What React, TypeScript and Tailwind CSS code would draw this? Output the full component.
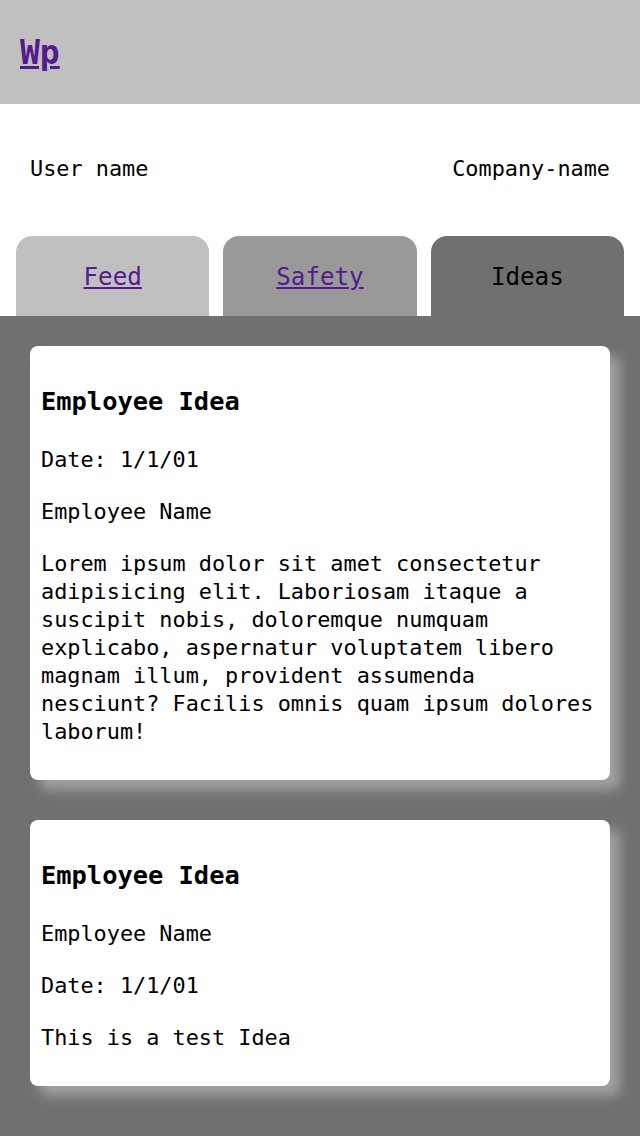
import React from "react";

const mono = { fontFamily: '"DejaVu Sans Mono", "Liberation Mono", monospace' };

function Card({ lines }: { lines: string[] }) {
  return (
    <div className="bg-white rounded-lg px-[11px] pt-[40px] pb-[34px] shadow-[10px_10px_12px_#a0a0a0]">
      <h3 className="text-[25.4px] font-bold leading-[30px] text-black">Employee Idea</h3>
      {lines.map((l, i) => (
        <p key={i} className={`text-[21.85px] leading-[28px] text-black ${i === 0 ? "mt-[30px]" : "mt-[24px]"}`}>
          {l}
        </p>
      ))}
    </div>
  );
}

export default function App() {
  return (
    <div style={mono} className="w-[640px] min-h-[1136px] bg-[#707070] flex flex-col">
      <header className="h-[104px] bg-[#c0c0c0] flex items-center px-[20px]">
        <a href="#" className="text-[33px] font-bold leading-none text-[#551a8b] underline">Wp</a>
      </header>
      <div className="bg-white">
        <div className="h-[132px] flex items-center justify-between px-[30px] text-[21.85px] text-black pb-[2px]">
          <span>User name</span>
          <span>Company-name</span>
        </div>
        <div className="flex gap-[14px] px-[16px]">
          <div className="flex-1 h-[80px] rounded-t-[16px] bg-[#c0c0c0] flex items-center justify-center text-[24.2px] pt-[2px]">
            <a href="#" className="text-[#551a8b] underline">Feed</a>
          </div>
          <div className="flex-1 h-[80px] rounded-t-[16px] bg-[#999999] flex items-center justify-center text-[24.2px] pt-[2px]">
            <a href="#" className="text-[#551a8b] underline">Safety</a>
          </div>
          <div className="flex-1 h-[80px] rounded-t-[16px] bg-[#707070] flex items-center justify-center text-[24.2px] pt-[2px] text-black">
            Ideas
          </div>
        </div>
      </div>
      <main className="flex-1 bg-[#707070] px-[30px] pt-[30px] pb-[50px] flex flex-col gap-[40px]">
        <Card
          lines={[
            "Date: 1/1/01",
            "Employee Name",
            "Lorem ipsum dolor sit amet consectetur adipisicing elit. Laboriosam itaque a suscipit nobis, doloremque numquam explicabo, aspernatur voluptatem libero magnam illum, provident assumenda nesciunt? Facilis omnis quam ipsum dolores laborum!",
          ]}
        />
        <Card lines={["Employee Name", "Date: 1/1/01", "This is a test Idea"]} />
      </main>
    </div>
  );
}
